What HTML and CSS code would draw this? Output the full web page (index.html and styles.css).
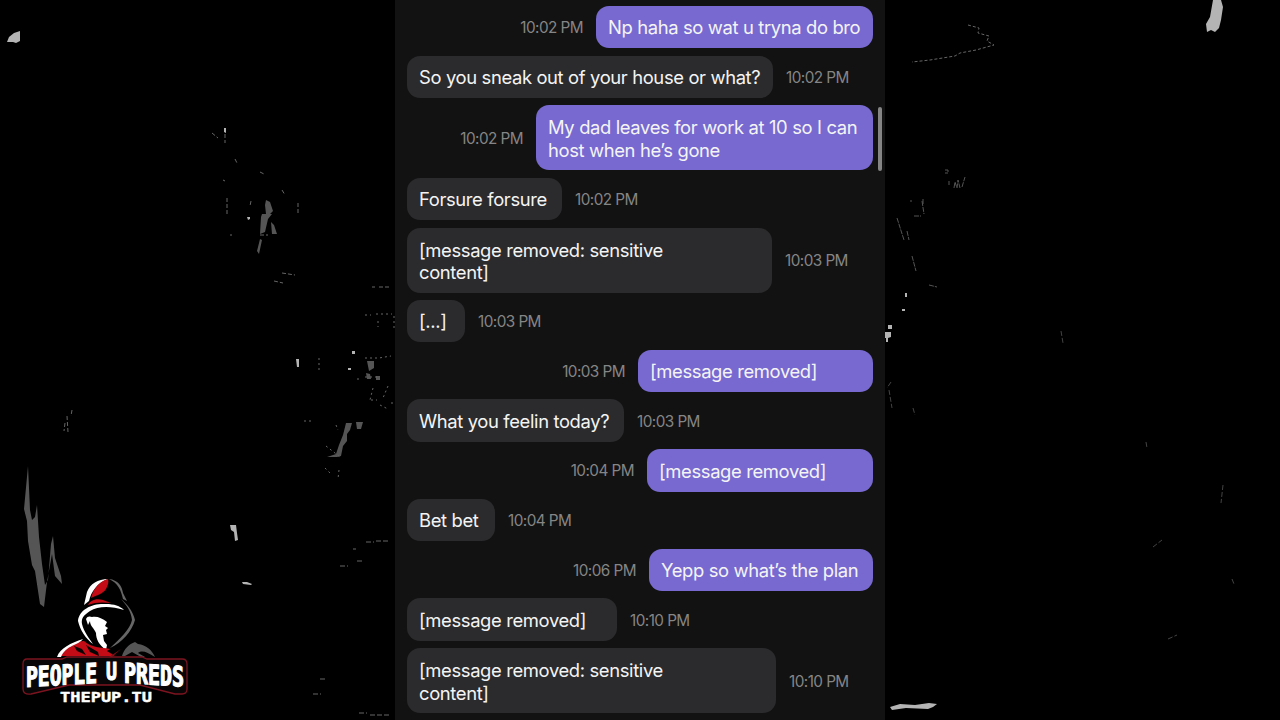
FILE: index.html
```html
<!DOCTYPE html>
<html lang="en">
<head>
    <meta charset="UTF-8">
    <meta name="viewport" content="width=device-width, initial-scale=1.0">
    <title>Chat Log</title>
    <link rel="stylesheet" href="styles.css">
</head>
<body>

    <!-- Scratched film texture -->
    <svg class="texture" viewBox="0 0 1280 720" aria-hidden="true">
        <g fill="#b4b4b4">
            <path d="M7 42l2-5 5-4 6-2v10l-4 2-3-1z"/>
            <path d="M1213 0h8l2 7-2 13-2 8-4 4-4-2-4 2-1-8 4-7z"/>
            <path d="M890 707l10-3 15 1 14-2 8 1-4 3-5 2-22-1-14 2z"/>
            <path d="M230 525h6l1 8 1 7-3 1-1-9-3-2z"/>
            <path d="M242 582l5 0 5 2-1 1-8-1z"/>
            <path d="M885 332h6v5l-3 1v4h-2v-4h-1zM888 325h4v4h-4z"/>
            <path d="M224 128h2v5l-2-1zM296 359h3v8h-2zM352 351h3v3h-3zM348 368h3v2h-3zM905 293h2v4h-2zM902 309h3v2h-3zM247 217h3v2l-2 1z"/>
        </g>
        <g fill="#555">
            <path d="M28 466l2 44 2 10 3-3 2-12 2 32 3 27 3 21 3-5 3-36 2-8 2 22 6 18 1 8-7-8-3-22-5 28-3 25-4-3-5-33-3-6-4-24-1-20-3-12z"/>
            <path d="M266 200l4 2 3 9-3 3h-4l-1-9zM262 214l10 0-4 5-3 13-5 2 1-17zM271 222l3 3 3 9h-5zM260 239l2 1-3 14-2-3z"/>
            <path d="M346 423h6l-2 7-3 4v7l-4 5-2 10-4 1-10 0 9-3 3-9 4-10zM356 422h7l-2 7h-4zM367 361l7 0v7l-5 3zM366 373l4 1 1 5h-4zM376 376h4v4h-4z"/>
        </g>
        <g class="scratches">
            <path d="M968 25l11 3-1 5 11 3-2 5 7 4-18 5-16 3-5 3-25 4-18 2" stroke-dasharray="3 2"/>
            <path d="M72 410l-1 6M67 416l1 16M65 423l-1 8M212 133l6 5M225 134v9M223 180l2 1M235 159l2 4M260 172l4 2M282 190l3 5M227 198v17M251 201l-1 5M260 235h8M282 273l13 2M274 281l9 2M298 203v10M230 235h2M372 287h3M379 287h10" stroke-dasharray="4 2"/>
            <path d="M365 358l14 0 12-2M365 377h14M365 315h6M376 314h16M378 321v6M394 316v12M319 358v14M357 379h5M371 400h6M373 388l-3 12M388 386l-5 12M380 405l8 4M392 402v5M304 421h9M336 425l2 5M326 446l14 11M325 468l5 5M339 470l-1 9" stroke-dasharray="2 3"/>
            <path d="M366 542h8M376 541h13M357 561h6M340 566h8M320 679h7M313 694h8M359 713h8M370 715h20M353 549h3" stroke-dasharray="5 2"/>
            <path d="M945 170h3v3h-3M949 181v4M954 188l1-6 2 6 1-8 2 8M962 187l3-10M923 199v6M910 201h2M922 201l2 13M914 216l7 0M897 218l7 22M907 231l2 9M912 256l4 15M929 285l8 2" stroke="#555" stroke-dasharray="5 1"/>
            <path d="M891 382l-4 6M889 390l3 18M913 408l2 7M1223 485l-2 18M1146 442l1 6M1061 331l2 12M1153 547l9-7M1232 579l2 5M1168 639l9-4" stroke="#444" stroke-dasharray="5 2"/>
        </g>
    </svg>

    <main class="chat">
        <div class="message sent">
            <span class="time">10:02 PM</span>
            <p class="bubble w-277">Np haha so wat u tryna do bro</p>
        </div>
        <div class="message">
            <p class="bubble w-366">So you sneak out of your house or what?</p>
            <span class="time">10:02 PM</span>
        </div>
        <div class="message sent tall">
            <span class="time">10:02 PM</span>
            <p class="bubble w-337">My dad leaves for work at 10 so I can<br>host when he’s gone</p>
        </div>
        <div class="message">
            <p class="bubble w-155">Forsure forsure</p>
            <span class="time">10:02 PM</span>
        </div>
        <div class="message tall">
            <p class="bubble w-365">[message removed: sensitive<br>content]</p>
            <span class="time">10:03 PM</span>
        </div>
        <div class="message">
            <p class="bubble w-58">[...]</p>
            <span class="time">10:03 PM</span>
        </div>
        <div class="message sent">
            <span class="time">10:03 PM</span>
            <p class="bubble w-235">[message removed]</p>
        </div>
        <div class="message">
            <p class="bubble w-217">What you feelin today?</p>
            <span class="time">10:03 PM</span>
        </div>
        <div class="message sent">
            <span class="time">10:04 PM</span>
            <p class="bubble w-226">[message removed]</p>
        </div>
        <div class="message">
            <p class="bubble w-88">Bet bet</p>
            <span class="time">10:04 PM</span>
        </div>
        <div class="message sent">
            <span class="time">10:06 PM</span>
            <p class="bubble w-224">Yepp so what’s the plan</p>
        </div>
        <div class="message">
            <p class="bubble w-210">[message removed]</p>
            <span class="time">10:10 PM</span>
        </div>
        <div class="message tall">
            <p class="bubble w-369">[message removed: sensitive<br>content]</p>
            <span class="time">10:10 PM</span>
        </div>
        <div class="scrollbar"></div>
    </main>

    <svg class="logo" viewBox="0 560 220 160" role="img" aria-label="People U Preds">
        <!-- Hood -->
        <path fill="#fff" d="M108 579c-10 0-18 5-21 13l-3 13 5-4c2-9 8-18 19-22z"/>
        <path fill="#c40c16" d="M108 579c-10 3-15 11-17 19 6-3 12-4 15-9 2-4 3-7 2-10z"/>
        <path fill="#c40c16" d="M88 605c2-4 7-7 15-5l8 3c-8-1-16-1-23 2z"/>
        <path fill="#fff" d="M78 621c1-12 15-18 28-17 8 0 14 2 18 6-13-4-26-4-34 1-6 4-9 7-8 13 2 8 7 14 11 20-7-5-13-14-15-23z"/>
        <path fill="#666" d="M109 579c9 1 13 7 14 14l4 8-4-2c-2-9-5-16-14-20z"/>
        <path fill="#666" d="M121 599c6 5 12 12 14 21-3 11-13 23-25 28 10-9 20-19 22-28-1-9-5-14-11-21z"/>
        <!-- Face -->
        <path fill="#fff" d="M86 619c1-3 4-3 6-2 5-1 10 1 15 5l-2 4 3 2-2 2 1 4-4 1 1 6 3 4-1 5c-7-5-10-11-10-17-2-5-6-7-6-12l-2 4z"/>
        <!-- Shoulders -->
        <path fill="#c40c16" d="M61 656c4-9 13-15 23-15 8 7 16 6 26 8l-3 2 8 5H61z"/>
        <path fill="#fff" d="M57 657c3-9 14-14 26-18-4 6-17 6-22 18z"/>
        <path fill="#050505" d="M74 646l8 3 4 6-9-4zM86 645l12 7 1 4-9-4z"/>
        <path fill="#7e1016" d="M121 649l-9 8h-3z"/>
        <path fill="#555" d="M122 656c2-7 7-12 13-14l3 2c8 1 14 6 17 13-8-5-13-7-17-4l7 4h-4l-9-5-7 4z"/>
        <!-- Name plate -->
        <path class="plate" d="M27 659h35l5-2h75l5 2h35q5 0 5 5v25q0 5-5 5h-7l-35-9H69l-38 9q-8 1-8-5v-25q0-5 4-5z"/>
        <g class="name">
            <text x="0" y="0" textLength="71" lengthAdjust="spacingAndGlyphs" transform="matrix(1 -.06 0 1.1 26 687)">PEOPLE</text>
            <text x="106" y="680" textLength="11" lengthAdjust="spacingAndGlyphs">U</text>
            <text x="0" y="0" textLength="60" lengthAdjust="spacingAndGlyphs" transform="matrix(1 .07 0 1.1 124 682.5)">PREDS</text>
        </g>
        <text class="site" x="60" y="701.5" textLength="92" lengthAdjust="spacingAndGlyphs">THEPUP.TU</text>
    </svg>

</body>
</html>
```
FILE: styles.css
```css
* {
    margin: 0;
    padding: 0;
    box-sizing: border-box;
}

body {
    position: relative;
    display: flex;
    justify-content: center;
    width: 1280px;
    height: 720px;
    overflow: hidden;
    background-color: #000;
    font-family: Inter, "Liberation Sans", sans-serif;
}

/* Background scratches sit behind the chat */
.texture {
    position: absolute;
    top: 0;
    left: 0;
    width: 1280px;
    height: 720px;
}

.scratches {
    fill: none;
    stroke: #666;
    stroke-width: 1;
}

/* Chat column */
.chat {
    position: relative;
    display: flex;
    flex-direction: column;
    gap: 7.4px;
    width: 490px;
    height: 720px;
    padding: 6px 12px 0;
    overflow: hidden;
    background-color: #121212;
}

.message {
    display: flex;
    flex: none;
    align-items: center;
    gap: 13px;
    height: 42.35px;
}

.message.tall {
    height: 65px;
}

.message.sent {
    justify-content: flex-end;
}

.bubble {
    display: flex;
    align-items: center;
    height: 100%;
    padding: 1px 0 0 12px;
    border-radius: 13px;
    background-color: #2b2b2d;
    color: #f4f4f4;
    font-size: 18.4px;
    line-height: 22.4px;
    letter-spacing: -0.36px;
    white-space: nowrap;
}

.tall .bubble {
    display: block;
    padding-top: 11px;
}

.sent .bubble {
    background-color: #7769d0;
}

.time {
    padding-top: 1px;
    color: #858585;
    font-size: 15.3px;
    letter-spacing: -0.55px;
    white-space: nowrap;
}

/* Bubble widths */
.w-58 { width: 58px; }
.w-88 { width: 88px; }
.w-155 { width: 155px; }
.w-210 { width: 210px; }
.w-217 { width: 217px; }
.w-224 { width: 224px; }
.w-226 { width: 226px; }
.w-235 { width: 235px; }
.w-277 { width: 277px; }
.w-337 { width: 337px; }
.w-365 { width: 365px; }
.w-366 { width: 366px; }
.w-369 { width: 369px; }

.scrollbar {
    position: absolute;
    top: 107px;
    right: 3px;
    width: 4px;
    height: 64px;
    border-radius: 2px;
    background-color: #858585;
}

/* Channel logo */
.logo {
    position: absolute;
    top: 560px;
    left: 0;
    width: 220px;
    height: 160px;
}

.plate {
    fill: #080606;
    stroke: #7c1420;
    stroke-width: 1.3;
}

.name {
    fill: #fff;
    stroke: #fff;
    stroke-width: 1.2;
    font: bold 25px "DejaVu Sans Mono", monospace;
}

.site {
    fill: #fff;
    stroke: #fff;
    stroke-width: 0.4;
    font: bold 14px "DejaVu Sans Mono", monospace;
}
```
